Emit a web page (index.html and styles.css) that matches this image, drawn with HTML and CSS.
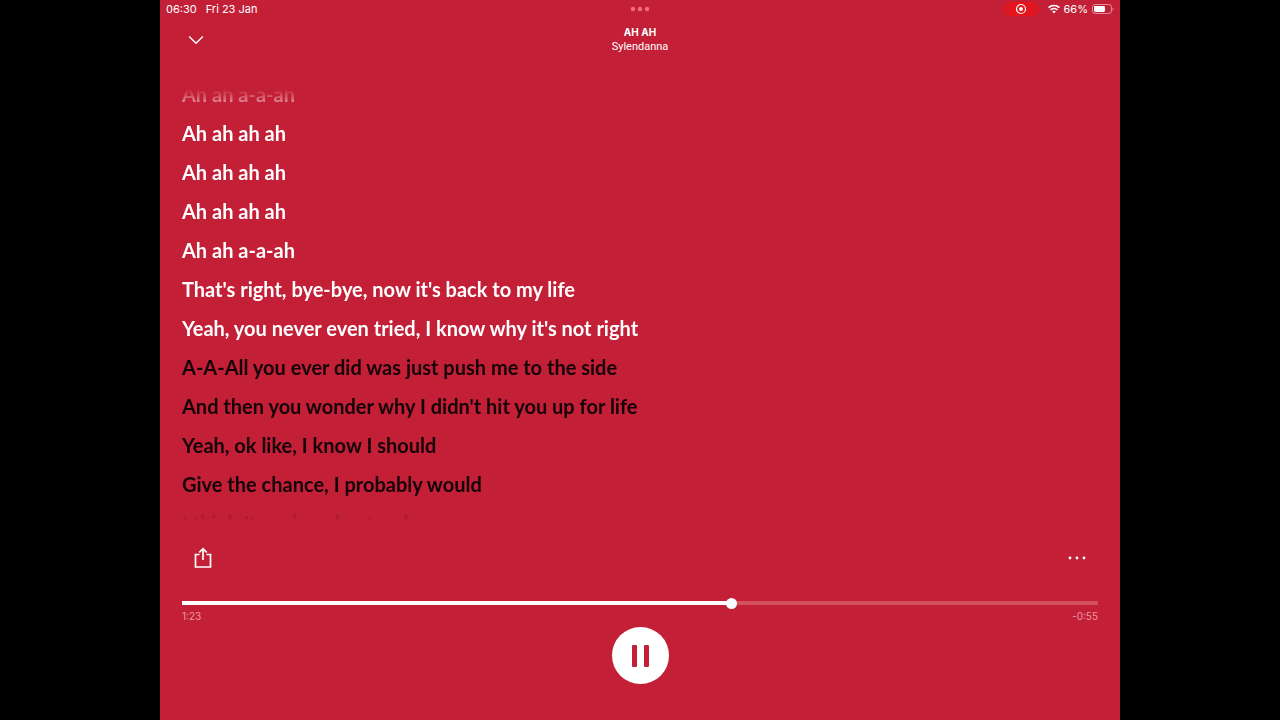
FILE: index.html
```html
<!DOCTYPE html>
<html lang="en">
<head>
  <meta charset="UTF-8">
  <meta name="viewport" content="width=device-width, initial-scale=1.0">
  <title>AH AH - Sylendanna</title>
  <link rel="stylesheet" href="styles.css">
</head>
<body>

  <main class="player">
    <div class="status-bar">
      <div class="status-left">
        <span>06:30</span>
        <span>Fri 23 Jan</span>
      </div>
      <svg class="multitask" width="20" height="6" viewBox="0 0 20 6" fill="currentColor">
        <circle cx="3" cy="3" r="2.2"/><circle cx="10" cy="3" r="2.2"/><circle cx="17" cy="3" r="2.2"/>
      </svg>
      <div class="status-right">
        <span class="recording">
          <svg width="12" height="12" viewBox="0 0 12 12">
            <circle cx="6" cy="6" r="4.5" fill="none" stroke="currentColor" stroke-width="1.2"/>
            <circle cx="6" cy="6" r="2" fill="currentColor"/>
          </svg>
        </span>
        <svg width="12" height="10" viewBox="0 0 12 10" fill="none" stroke="currentColor" stroke-width="1.7">
          <path d="M.6 3.7a7.7 7.7 0 0 1 10.8 0"/>
          <path d="M2.6 5.9a4.9 4.9 0 0 1 6.8 0"/>
          <path d="M6 9.4 4.2 7.6a2.6 2.6 0 0 1 3.6 0z" fill="currentColor" stroke="none"/>
        </svg>
        <span>66%</span>
        <svg width="22" height="10" viewBox="0 0 22 10">
          <rect x=".5" y=".5" width="19" height="9" rx="2.8" fill="none" stroke="currentColor" opacity=".5"/>
          <rect x="2" y="2" width="11" height="6" rx="1.4" fill="currentColor"/>
          <path d="M20.6 3.4c1.3.5 1.3 2.7 0 3.2z" fill="currentColor" opacity=".6"/>
        </svg>
      </div>
    </div>

    <header class="track-header">
      <button class="icon-button close" aria-label="Close lyrics">
        <svg width="16" height="10" viewBox="0 0 16 10" fill="none" stroke="currentColor" stroke-width="1.4">
          <path d="M1.2 1.5 8 8.2l6.8-6.7"/>
        </svg>
      </button>
      <div class="track">
        <h1>AH AH</h1>
        <p>Sylendanna</p>
      </div>
    </header>

    <section class="lyrics">
      <p class="sung">Ah ah a-a-ah</p>
      <p class="sung">Ah ah ah ah</p>
      <p class="sung">Ah ah ah ah</p>
      <p class="sung">Ah ah ah ah</p>
      <p class="sung">Ah ah a-a-ah</p>
      <p class="sung">That's right, bye-bye, now it's back to my life</p>
      <p class="sung">Yeah, you never even tried, I know why it's not right</p>
      <p>A-A-All you ever did was just push me to the side</p>
      <p>And then you wonder why I didn't hit you up for life</p>
      <p>Yeah, ok like, I know I should</p>
      <p>Give the chance, I probably would</p>
      <p>I think I'm misunderstood</p>
    </section>

    <div class="actions">
      <button class="icon-button" aria-label="Share">
        <svg width="18" height="22" viewBox="0 0 18 22" fill="none" stroke="currentColor" stroke-width="1.7">
          <path d="M5.5 7.5h-4v12.5h15V7.5h-4"/>
          <path d="M9 13V2M5.2 5.5 9 1.7l3.8 3.8"/>
        </svg>
      </button>
      <button class="icon-button" aria-label="More options">
        <svg width="18" height="4" viewBox="0 0 18 4" fill="currentColor">
          <circle cx="2" cy="2" r="1.4"/><circle cx="9" cy="2" r="1.4"/><circle cx="16" cy="2" r="1.4"/>
        </svg>
      </button>
    </div>

    <div class="progress">
      <input type="range" min="0" max="1000" value="601" aria-label="Playback position">
      <div class="times">
        <span>1:23</span>
        <span>-0:55</span>
      </div>
    </div>

    <button class="pause" aria-label="Pause">
      <svg width="17" height="22" viewBox="0 0 17 22" fill="currentColor">
        <rect x="0" y="0" width="5" height="22" rx="1"/>
        <rect x="12" y="0" width="5" height="22" rx="1"/>
      </svg>
    </button>
  </main>

</body>
</html>
```
FILE: styles.css
```css
* { box-sizing: border-box; }
body { margin: 0; background: #000; color: #fff; font-family: Inter, "Liberation Sans", sans-serif; }
h1, p { margin: 0; }
button { padding: 0; border: 0; background: none; color: inherit; font: inherit; cursor: pointer; }
svg { display: block; }

.player { display: flex; flex-direction: column; width: 75%; min-height: 100vh; margin: 0 auto; padding-bottom: 36px; background: #c31f37; }

.status-bar { display: grid; grid-template-columns: 1fr auto 1fr; align-items: center; height: 18px; padding: 0 6px; font-size: 11px; line-height: 18px; }
.status-left { display: flex; gap: 9px; }
.multitask { color: #f3707f; }
.status-right { display: flex; align-items: center; justify-content: flex-end; gap: 4px; }
.recording { display: flex; justify-content: center; width: 38px; margin-right: 4px; padding: 1px 0; border-radius: 7px; background: linear-gradient(90deg, #d01a2c, #e8141c 30%, #e8141c 70%, #d01a2c); }

.track-header { display: grid; grid-template-columns: 1fr auto 1fr; align-items: start; height: 57px; padding: 7px 22px 0; }
.icon-button { display: flex; align-items: center; justify-content: center; width: 42px; height: 30px; }
.close { width: 28px; }
.track { text-align: center; line-height: 14px; }
.track h1 { font-size: 10px; font-weight: 700; line-height: 14px; }
.track p { font-family: Roboto, sans-serif; font-size: 11px; line-height: 15px; }

/* lines fade out at both ends of the scroll area */
.lyrics { flex: 1 0 auto; padding: 0 22px; color: #140407; font: 700 20px/39px Lato, sans-serif; -webkit-mask-image: linear-gradient(transparent 14px, #000 42px, #000 calc(100% - 50px), transparent calc(100% - 22px)); mask-image: linear-gradient(transparent 14px, #000 42px, #000 calc(100% - 50px), transparent calc(100% - 22px)); }
.sung { color: #fff; }

.actions { display: flex; justify-content: space-between; padding: 0 22px; }

.progress { padding: 24px 22px 0; }
.progress input { display: block; width: 100%; height: 12px; margin: 0; appearance: none; border-radius: 2px; background: linear-gradient(90deg, #fff 60%, #d5505f 60%) center / 100% 4px no-repeat; }
.progress input::-webkit-slider-thumb { appearance: none; width: 11px; height: 11px; border-radius: 50%; background: #fff; }
.times { display: flex; justify-content: space-between; color: #eb9aa4; font-size: 10px; line-height: 14px; }

.pause { display: flex; align-items: center; justify-content: center; align-self: center; width: 57px; height: 57px; margin-top: 4px; border-radius: 50%; background: #fff; color: #c31f37; }
```
